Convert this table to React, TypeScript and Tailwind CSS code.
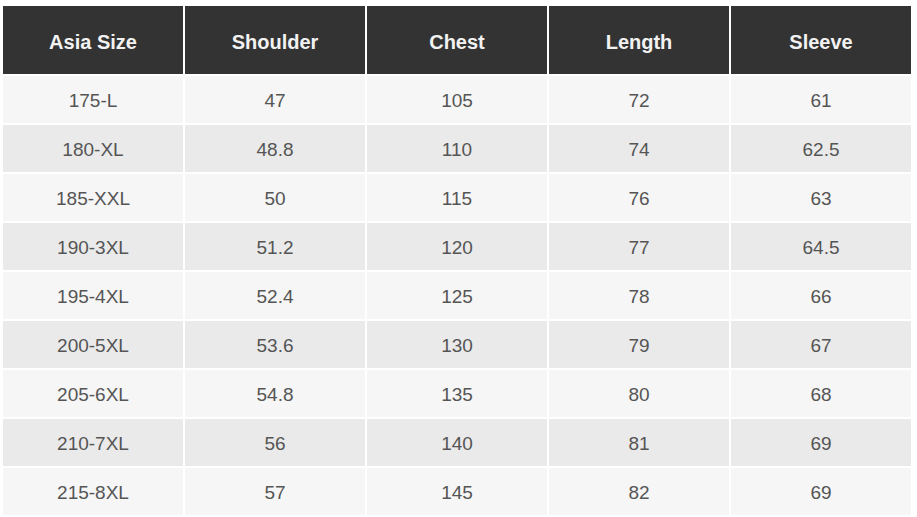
const headers = ['Asia Size', 'Shoulder', 'Chest', 'Length', 'Sleeve'];

const rows: string[][] = [
  ['175-L', '47', '105', '72', '61'],
  ['180-XL', '48.8', '110', '74', '62.5'],
  ['185-XXL', '50', '115', '76', '63'],
  ['190-3XL', '51.2', '120', '77', '64.5'],
  ['195-4XL', '52.4', '125', '78', '66'],
  ['200-5XL', '53.6', '130', '79', '67'],
  ['205-6XL', '54.8', '135', '80', '68'],
  ['210-7XL', '56', '140', '81', '69'],
  ['215-8XL', '57', '145', '82', '69'],
];

export default function App() {
  return (
    <div className="h-[517px] w-[917px] overflow-hidden bg-white pl-[3px] pt-[6px] font-['Liberation_Sans',Arial,sans-serif]">
      <div className="grid w-[908px] grid-cols-[repeat(5,180px)] gap-[2px]">
        {headers.map((h) => (
          <div
            key={h}
            className="flex h-[68px] items-center justify-center bg-[#333333] pt-[4px] text-[20px] font-bold text-[#f2f2f2]"
          >
            {h}
          </div>
        ))}
        {rows.map((row, i) =>
          row.map((cell, j) => (
            <div
              key={`${i}-${j}`}
              className={
                i % 2 === 0
                  ? 'flex h-[47px] items-center justify-center bg-[#f6f6f6] pt-[4px] text-[19px] text-[#555555]'
                  : 'flex h-[47px] items-center justify-center bg-[#eaeaea] pt-[4px] text-[19px] text-[#555555]'
              }
            >
              {cell}
            </div>
          )),
        )}
      </div>
    </div>
  );
}
